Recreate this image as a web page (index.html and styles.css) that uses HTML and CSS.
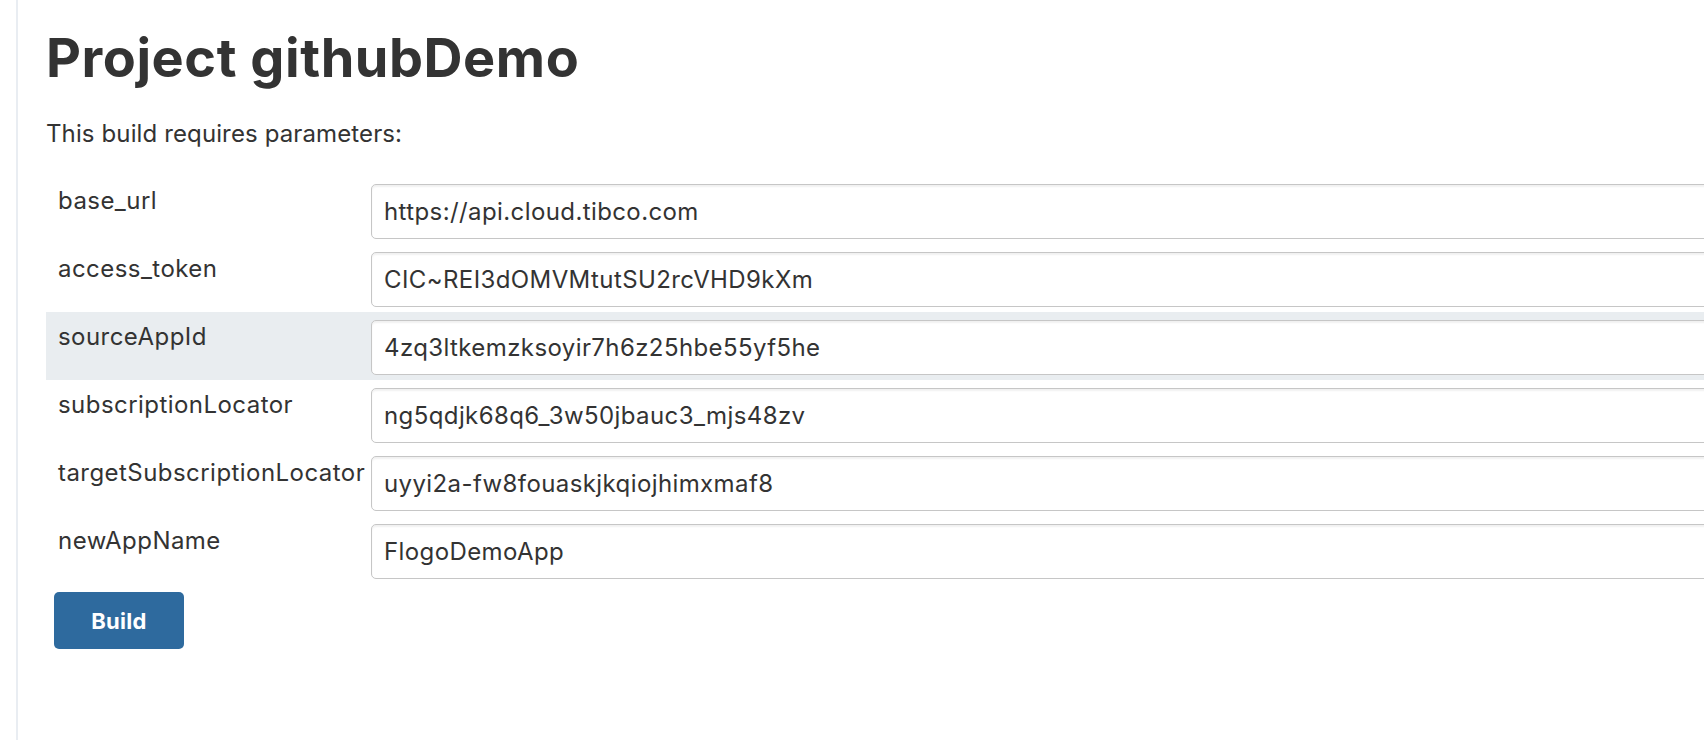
FILE: index.html
```html
<!DOCTYPE html>
<html lang="en">
<head>
<meta charset="utf-8">
<title>Project githubDemo</title>
<link rel="stylesheet" href="styles.css">
</head>
<body>
<div class="page">
  <main class="main">
    <h1 class="title">Project githubDemo</h1>
    <p class="intro">This build requires parameters:</p>
    <form class="params">
      <div class="row">
        <div class="label">base_url</div>
        <div class="field"><input class="input" type="text" value="https://api.cloud.tibco.com"></div>
      </div>
      <div class="row">
        <div class="label">access_token</div>
        <div class="field"><input class="input" type="text" value="CIC~REI3dOMVMtutSU2rcVHD9kXm"></div>
      </div>
      <div class="row row-hover">
        <div class="label">sourceAppId</div>
        <div class="field"><input class="input" type="text" value="4zq3ltkemzksoyir7h6z25hbe55yf5he"></div>
      </div>
      <div class="row">
        <div class="label">subscriptionLocator</div>
        <div class="field"><input class="input" type="text" value="ng5qdjk68q6_3w50jbauc3_mjs48zv"></div>
      </div>
      <div class="row">
        <div class="label">targetSubscriptionLocator</div>
        <div class="field"><input class="input" type="text" value="uyyi2a-fw8fouaskjkqiojhimxmaf8"></div>
      </div>
      <div class="row">
        <div class="label">newAppName</div>
        <div class="field"><input class="input" type="text" value="FlogoDemoApp"></div>
      </div>
      <div class="actions">
        <button class="btn" type="button">Build</button>
      </div>
    </form>
  </main>
</div>
</body>
</html>
```
FILE: styles.css
```css
html, body {
  margin: 0;
  padding: 0;
  background: #ffffff;
  overflow: hidden;
}
body {
  font-family: Inter, "Noto Sans", "Liberation Sans", sans-serif;
  color: #333333;
}
.page {
  padding-left: 16px;
  height: 740px;
}
.main {
  border-left: 2px solid #e9edf2;
  height: 100%;
  padding-left: 28px;
  padding-top: 26px;
  box-sizing: border-box;
}
.title {
  margin: 0;
  font-size: 54px;
  line-height: 64px;
  font-weight: 700;
  letter-spacing: 0.55px;
  color: #333333;
}
.intro {
  margin: 28px 0 26px 0;
  font-size: 24px;
  line-height: 32px;
  letter-spacing: 0.12px;
}
.params {
  display: flex;
  flex-direction: column;
}
.row {
  display: grid;
  grid-template-columns: 325px 1fr;
  height: 68px;
  box-sizing: border-box;
  padding-top: 8px;
}
.row-hover {
  background: #e9edf0;
}
.label {
  padding-left: 12px;
  padding-top: 1px;
  font-size: 24px;
  line-height: 32px;
  letter-spacing: 0.45px;
  white-space: nowrap;
}
.field {
  min-width: 0;
}
.input {
  display: block;
  width: 1400px;
  height: 55px;
  box-sizing: border-box;
  border: 1px solid #c6c6c6;
  border-radius: 5px;
  box-shadow: inset 0 2px 2px rgba(0, 0, 0, 0.06);
  padding: 0 12px;
  font-family: Inter, "Noto Sans", "Liberation Sans", sans-serif;
  font-size: 24px;
  letter-spacing: 0.4px;
  color: #333333;
  background: #ffffff;
  outline: none;
}
.actions {
  padding: 8px 0 0 8px;
}
.btn {
  width: 130px;
  height: 57px;
  border: none;
  border-radius: 5px;
  background: #2e6a9e;
  color: #ffffff;
  font-family: Inter, "Noto Sans", "Liberation Sans", sans-serif;
  font-size: 22px;
  letter-spacing: 0.3px;
  font-weight: 700;
  padding: 0;
}
```
